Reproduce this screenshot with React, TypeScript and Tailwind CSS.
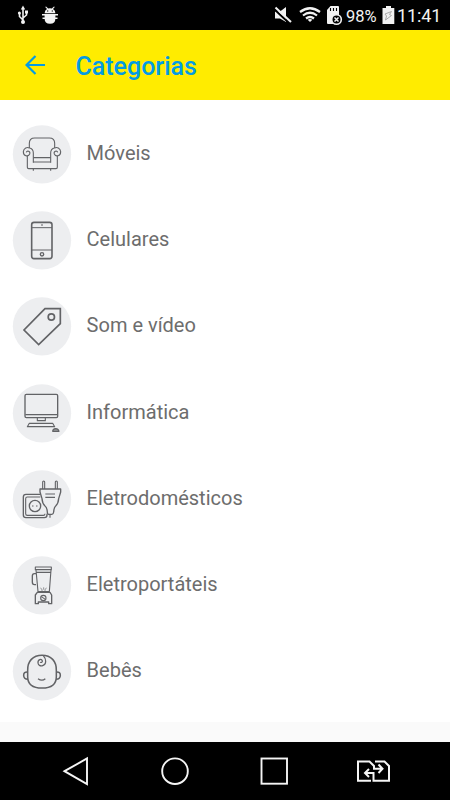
import type { ReactNode } from "react";

interface CategoryProps {
    key: number;
    title: string;
    icon: ReactNode;
}

const ArmchairIcon = () => (
    <>
        <path d="M64 84V70Q64 54 80 54H124Q140 54 140 70V84" />
        <path d="M64 84C58 80 47 84 46 95C46 108 60 112 65 102C68 94 57 90 55 97" />
        <path d="M140 84C146 80 157 84 158 95C158 108 144 112 139 102C136 94 147 90 149 97" />
        <path d="M64 84Q76 86 76 99V128M140 84Q128 86 128 99V128" />
        <path d="M76 113H128M76 126H128" />
        <path d="M58 107V142Q58 146 62 146H144Q148 146 148 142V107" />
        <path d="M76 147V152M128 147V152" />
    </>
);

const PhoneIcon = () => (
    <>
        <rect x="71" y="49" width="61" height="109" rx="7" strokeWidth="4.8" />
        <path d="M71 65H132M71 132H132" strokeWidth="3" />
        <path d="M99 57H105" strokeWidth="3.5" />
        <circle cx="102" cy="145" r="5" strokeWidth="4" />
    </>
);

const TagIcon = () => (
    <g strokeWidth="5" strokeLinejoin="miter">
        <path d="M111 50H157V95L92 158L48 114Z" />
        <circle cx="130" cy="75" r="9.5" />
    </g>
);

const ComputerIcon = () => (
    <>
        <rect x="51" y="46" width="98" height="70" rx="4" strokeWidth="4" />
        <path d="M52 107H148" />
        <path d="M88 117V125H112V117" />
        <path d="M64 133H134L140 143H58Z" />
        <path d="M134 157Q134 150 143 149Q152 150 153 157Z" fill="#999a9c" />
    </>
);

const PlugIcon = () => (
    <>
        <path d="M96 88H54Q46 88 46 96V150Q46 158 54 158H109Q117 158 117 150V146" strokeWidth="4" />
        <path d="M97 96H58Q53 96 53 101V146Q53 151 58 151H106Q111 151 111 146" />
        <circle cx="81" cy="123" r="17" strokeWidth="4" />
        <path d="M73 123H76M85 123H88" strokeWidth="5" />
        <path d="M96 72H158V81L152 101Q151 116 143 123Q138 127 137 141Q136 148 132 148H122Q118 148 118 141Q117 127 111 123Q103 116 102 101L96 81Z" strokeWidth="4" />
        <path d="M104 72V51Q104 48 107 48Q110 48 110 51V72M142 72V51Q142 48 145 48Q148 48 148 51V72" />
        <path d="M112 87H141M112 97H141M126 149V158" />
    </>
);

const BlenderIcon = () => (
    <>
        <path d="M82 48H130V56H82ZM84 57L90 122H124L129 57M85 64H128" />
        <path d="M84 68H79Q73 68 73 75V93Q73 101 79 101H84" strokeWidth="4" />
        <path d="M97 111L102 115V121M116 111L111 115V121M107 109V116" strokeWidth="2" />
        <path d="M88 124H126L131 132V158H122V153H91V158H82V132Z" strokeWidth="4" />
        <circle cx="106" cy="141" r="8" />
        <path d="M100 137L112 145" />
    </>
);

const BabyIcon = () => (
    <g strokeWidth="4.6">
        <path d="M59 101C58 72 75 55 102 55C129 55 146 72 145 101V119C145 143 131 153 102 153C73 153 59 143 59 119Z" />
        <path d="M59 105Q47 104 47 115Q47 127 60 127M145 105Q157 104 157 115Q157 127 144 127" />
        <path d="M106 56Q113 64 113 73C113 88 92 92 90 78C89 67 101 64 103 72C104 76 98 78 97 75" strokeWidth="3.8" />
        <path d="M90 125Q102 134 112 125" strokeWidth="3.8" />
    </g>
);

const categories: CategoryProps[] = [
    { key: 1, title: "Móveis", icon: <ArmchairIcon /> },
    { key: 2, title: "Celulares", icon: <PhoneIcon /> },
    { key: 3, title: "Som e vídeo", icon: <TagIcon /> },
    { key: 4, title: "Informática", icon: <ComputerIcon /> },
    { key: 5, title: "Eletrodomésticos", icon: <PlugIcon /> },
    { key: 6, title: "Eletroportáteis", icon: <BlenderIcon /> },
    { key: 7, title: "Bebês", icon: <BabyIcon /> },
];

const StatusBar = () => (
    <div className="flex h-[30px] shrink-0 items-center justify-between bg-black pr-[9px] pl-4 text-[#f2f2f2]">
        {/* usb + debug */}
        <svg width="44" height="30" viewBox="0 0 44 30" fill="none" stroke="currentColor" strokeWidth="1.6">
            <path d="M7 22V8M7 20L3.5 16.5V13M7 18L10.5 15V12" />
            <path d="M7 5.5L4.8 9.5H9.2Z" fill="currentColor" stroke="none" />
            <circle cx="3.4" cy="13" r="1.5" fill="currentColor" stroke="none" />
            <path d="M9 10.5H12V13.5H9Z" fill="currentColor" stroke="none" />
            <circle cx="7" cy="22" r="2" fill="currentColor" stroke="none" />
            <path d="M28.6 13.2Q28.6 10.3 31 9L29.2 7L30 6.4L32.2 8.5Q34 8 35.8 8.5L38 6.4L38.8 7L37 9Q39.4 10.3 39.4 13.2Z" fill="currentColor" stroke="none" />
            <path d="M28.6 14.3H39.4V18.5Q39.4 23.8 34 23.8Q28.6 23.8 28.6 18.5Z" fill="currentColor" stroke="none" />
            <path d="M26 14.8H42M26.5 18.3H41.5" />
            <path d="M31 11H32.3M35.7 11H37" stroke="#000" strokeWidth="1.2" />
        </svg>
        <div className="flex items-center">
            <svg width="72" height="30" viewBox="0 0 72 30" fill="none" stroke="currentColor" strokeWidth="2">
                {/* muted */}
                <path d="M4 11.5H9L15 7V22L9 18.5H4Z" fill="currentColor" stroke="none" />
                <path d="M3 9L18 23" stroke="#000" strokeWidth="2" />
                <path d="M4.5 7.5L20 22" />
                {/* wifi */}
                <path d="M29 12Q39 4.5 49 12M32 15.5Q39 10 46 15.5M35 18.5Q39 15.5 43 18.5" strokeWidth="2.2" />
                <path d="M36.6 19.8Q39 18 41.4 19.8L39 22Z" fill="currentColor" stroke="none" />
                {/* sd card */}
                <path d="M56 10L59.5 6H67Q68 6 68 7V24H57Q56 24 56 23Z" fill="currentColor" stroke="none" />
                <path d="M59.5 8V11M62.5 8V11M65.5 8V11" stroke="#000" strokeWidth="1.1" />
                <circle cx="65.5" cy="19.5" r="4.8" fill="#000" strokeWidth="1.6" />
                <path d="M63.5 17.5L67.5 21.5M67.5 17.5L63.5 21.5" strokeWidth="1.5" />
            </svg>
            <span className="ml-[3px] w-[36px] pt-[3px] text-[16.5px] leading-[27px]">98%</span>
            <svg width="13" height="30" viewBox="0 0 13 30">
                <path d="M4 6H9V8H12.3V24H.5V8H4Z" fill="currentColor" />
                <path d="M9.5 11.5L3 14L4.5 16L3.5 20L9.5 15.5L7.5 14.5Z" fill="none" stroke="#aaa" />
            </svg>
            <span className="ml-[2px] w-[44px] pt-[2px] text-[18px] leading-[28px] tracking-[-0.1px] whitespace-nowrap">11:41</span>
        </div>
    </div>
);

const Header = () => (
    <header className="flex h-[70px] shrink-0 items-center bg-[#ffec00] pl-[25px] text-[#039be5]">
        <button aria-label="Voltar">
            <svg width="21" height="22" viewBox="0 0 21 22" fill="none" stroke="currentColor" strokeWidth="2.2">
                <path d="M20 11H2M10.5 2L1.5 11L10.5 20" />
            </svg>
        </button>
        <h1 className="ml-[29.5px] pt-[3px] text-[25px] leading-[30px] font-medium">Categorias</h1>
    </header>
);

const NavBar = () => (
    <nav className="h-[58px] shrink-0 bg-black">
        <svg width="450" height="58" viewBox="0 0 450 58" fill="none" stroke="#f5f5f5" strokeWidth="1.9">
            <path d="M64.5 29.2L87 16.5V42Z" />
            <circle cx="175" cy="29.2" r="12.8" />
            <rect x="261.5" y="16.5" width="25.5" height="25.2" />
            <path d="M371 38.8H358V19.5H369.5L374 24V26.8H382M378.5 22.5L382.5 26.8L378.5 31" strokeWidth="2" />
            <path d="M375 19.5H384.5L389 24V38.8H373.5V31H365.5M369 27L365 31L369 35" strokeWidth="2" />
        </svg>
    </nav>
);

const App = () => {
    return (
        <div className="flex h-[800px] w-[450px] flex-col overflow-hidden bg-[#fafafa] font-[Roboto,sans-serif]">
            <StatusBar />
            <Header />
            <ul className="h-[622px] shrink-0 bg-white pt-[11px]">
                {categories.map((v) => (
                    <li key={v.key} className="flex h-[86.2px] items-center pl-[13px]">
                        <svg
                            width="58"
                            height="58"
                            viewBox="15 15 174 174"
                            fill="none"
                            stroke="#626366"
                            strokeWidth="3.3"
                            strokeLinejoin="round"
                            className="shrink-0 overflow-visible"
                        >
                            <circle cx="102" cy="103" r="87.5" fill="#edeef0" stroke="none" />
                            {v.icon}
                        </svg>
                        <span className="ml-[15.6px] pb-[2px] text-[20px] leading-6 text-[#6d6d6d]">{v.title}</span>
                    </li>
                ))}
            </ul>
            <div className="h-5 shrink-0" />
            <NavBar />
        </div>
    );
};

export default App;
